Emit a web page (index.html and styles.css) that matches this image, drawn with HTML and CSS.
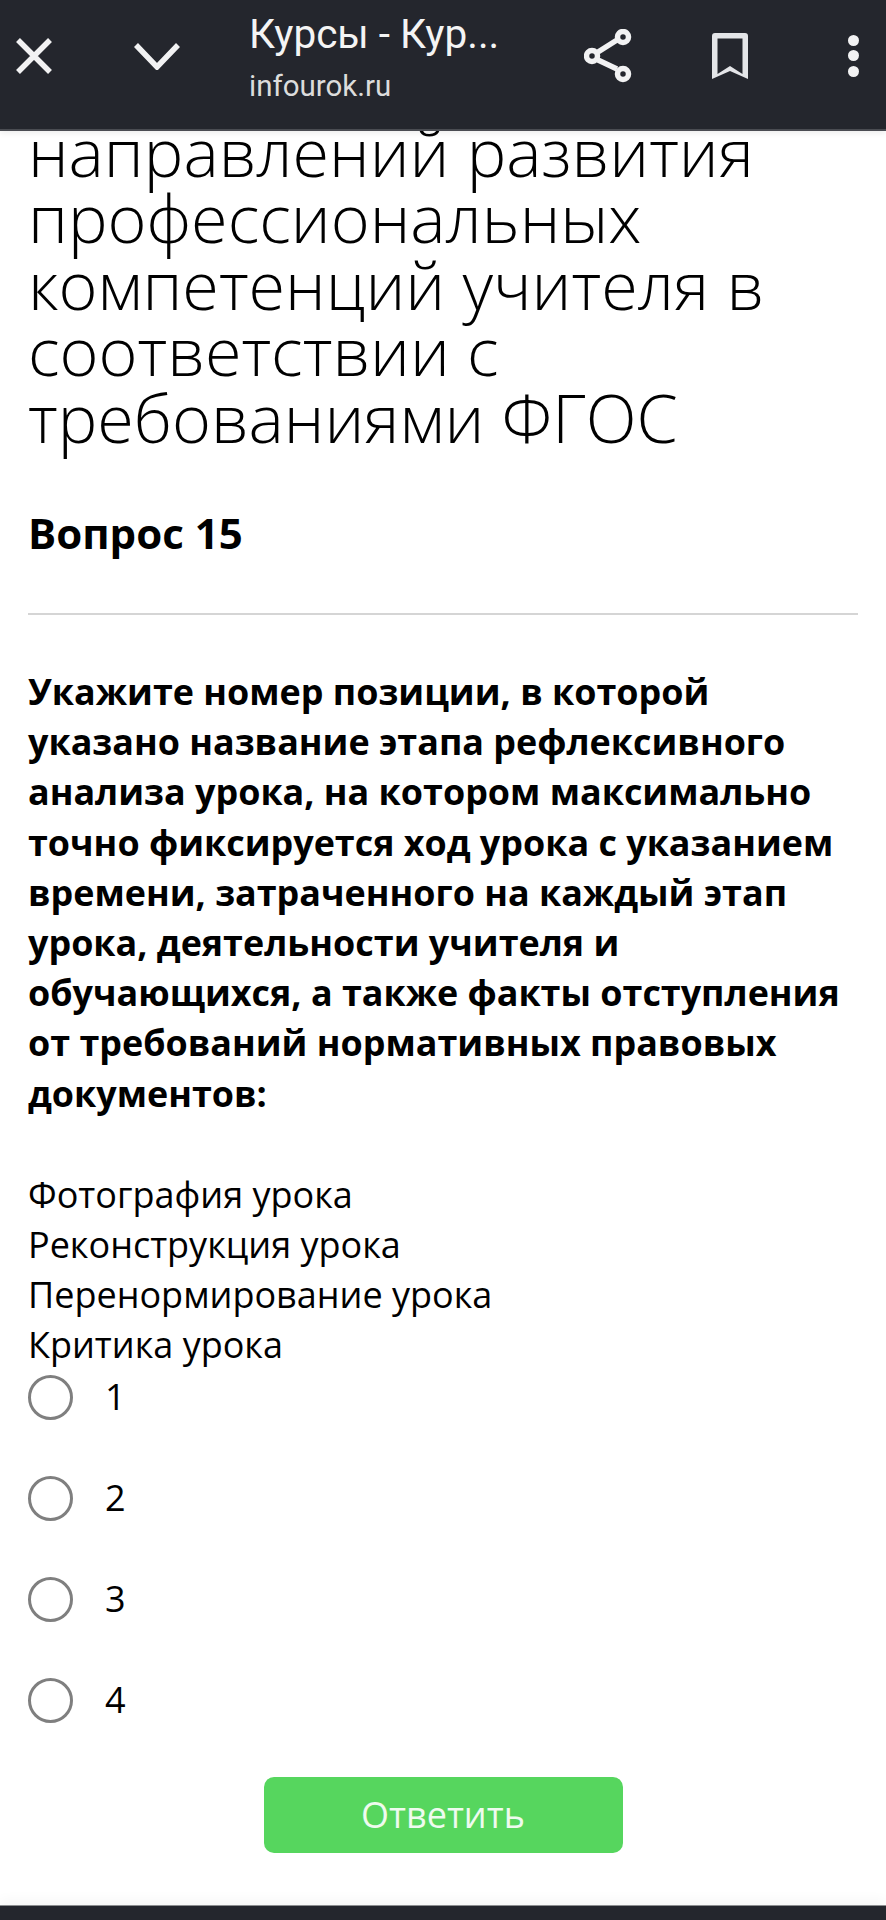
FILE: index.html
```html
<!DOCTYPE html>
<html lang="en">
<head>
    <meta charset="UTF-8">
    <meta name="viewport" content="width=device-width, initial-scale=1.0">
    <title>Курсы - Курсы</title>
    <link rel="stylesheet" href="styles.css">
</head>
<body>
    <header class="topbar">
        <svg class="icon icon-close" viewBox="0 0 36 36"><path d="M2 2L34 34M34 2L2 34"/></svg>
        <svg class="icon icon-down" viewBox="0 0 46 28"><path d="M2 3L23 25L44 3"/></svg>
        <div class="topbar-title">
            <div class="topbar-name">Курсы - Кур...</div>
            <div class="topbar-url">infourok.ru</div>
        </div>
        <svg class="icon icon-share" viewBox="0 0 48 54">
            <path d="M33 11L14 23M14 31L33 40"/>
            <circle cx="39" cy="8" r="5.5"/>
            <circle cx="8" cy="27" r="5.5"/>
            <circle cx="39" cy="45" r="5.5"/>
        </svg>
        <svg class="icon-mark" viewBox="0 0 36 46"><path fill-rule="evenodd" d="M0 3Q0 0 3 0H33Q36 0 36 3V46L18 38L0 46ZM5.5 5.5V41L18 33L30.5 41V5.5Z"/></svg>
        <div class="icon-dots"><span></span><span></span><span></span></div>
    </header>

    <main class="content">
        <h1>направлений развития профессиональных компетенций учителя в соответствии с требованиями ФГОС</h1>
        <h2>Вопрос 15</h2>
        <hr>
        <p class="question">Укажите номер позиции, в которой указано название этапа рефлексивного анализа урока, на котором максимально точно фиксируется ход урока с указанием времени, затраченного на каждый этап урока, деятельности учителя и обучающихся, а также факты отступления от требований нормативных правовых документов:</p>
        <ul class="positions">
            <li>Фотография урока</li>
            <li>Реконструкция урока</li>
            <li>Перенормирование урока</li>
            <li>Критика урока</li>
        </ul>
        <div class="options">
            <div class="option"><span class="radio"></span>1</div>
            <div class="option"><span class="radio"></span>2</div>
            <div class="option"><span class="radio"></span>3</div>
            <div class="option"><span class="radio"></span>4</div>
        </div>
        <button class="answer" type="button">Ответить</button>
    </main>

    <div class="bottombar"></div>
</body>
</html>
```

FILE: styles.css
```css
* {
    box-sizing: border-box;
}

body {
    margin: 0;
    width: 886px;
    height: 1920px;
    overflow: hidden;
    display: flex;
    flex-direction: column;
    position: relative;
    font-family: "Open Sans", sans-serif;
    background-color: #fff;
    color: #000;
}

.topbar {
    position: absolute;
    top: 0;
    left: 0;
    right: 0;
    height: 131px;
    display: flex;
    align-items: center;
    background-color: #24262d;
    border-bottom: 2px solid #4a4c52;
    box-shadow: 0 2px 6px rgba(0, 0, 0, 0.08);
    color: #fff;
    padding: 0 26px 18px 16px;
}

.icon {
    flex: none;
    fill: none;
    stroke: #f2f2f3;
    stroke-width: 5.5;
}

.icon-close {
    width: 36px;
    height: 36px;
}

.icon-down {
    width: 46px;
    height: 28px;
    margin-left: 82px;
}

.topbar-title {
    width: 300px;
    margin-left: 69px;
    padding-top: 3px;
    font-family: Roboto, sans-serif;
}

.topbar-name {
    font-size: 40.5px;
    line-height: 48px;
    color: #f4f4f4;
}

.topbar-url {
    font-size: 29.5px;
    line-height: 36px;
    margin-top: 10px;
    color: #dcdcdc;
}

.icon-share {
    width: 48px;
    height: 54px;
    margin-left: 35px;
}

.icon-mark {
    flex: none;
    width: 36px;
    height: 46px;
    margin-left: 80px;
    fill: #e4e5e8;
}

.icon-dots {
    margin-left: 100px;
    display: flex;
    flex-direction: column;
    gap: 4.5px;
}

.icon-dots span {
    width: 11px;
    height: 11px;
    border-radius: 50%;
    background-color: #f2f2f3;
}

.content {
    flex: 1;
    padding: 118px 28px 0;
}

h1 {
    margin: 0;
    font-weight: 300;
    font-size: 66.5px;
    line-height: 66.4px;
}

h2 {
    margin: 56px 0 0;
    font-weight: 700;
    font-size: 42px;
    line-height: 54px;
}

hr {
    margin: 53px 0 0;
    border: none;
    border-top: 2px solid #d5d5d5;
}

.question {
    margin: 52px 0 0;
    font-weight: 700;
    font-size: 35.9px;
    line-height: 50.2px;
}

.positions {
    list-style: none;
    margin: 51px 0 0;
    padding: 0;
    font-size: 36px;
    line-height: 50.2px;
}

.options {
    margin-top: 1px;
}

.option {
    height: 101px;
    display: flex;
    align-items: flex-start;
    font-size: 36px;
    line-height: 50px;
}

.radio {
    width: 45px;
    height: 45px;
    margin: 3px 32px 0 0;
    border: 3px solid #7f7f7f;
    border-radius: 50%;
}

.answer {
    display: block;
    width: 359px;
    height: 76px;
    margin: 1px auto 0;
    border: none;
    border-radius: 10px;
    background-color: #56d65e;
    color: #eefbef;
    font-family: "Open Sans", sans-serif;
    font-size: 36px;
}

.bottombar {
    height: 15px;
    flex: none;
    background-color: #24262d;
    border-top: 1px solid #8c8e90;
    box-shadow: 0 -6px 12px rgba(0, 0, 0, 0.03);
}
```
